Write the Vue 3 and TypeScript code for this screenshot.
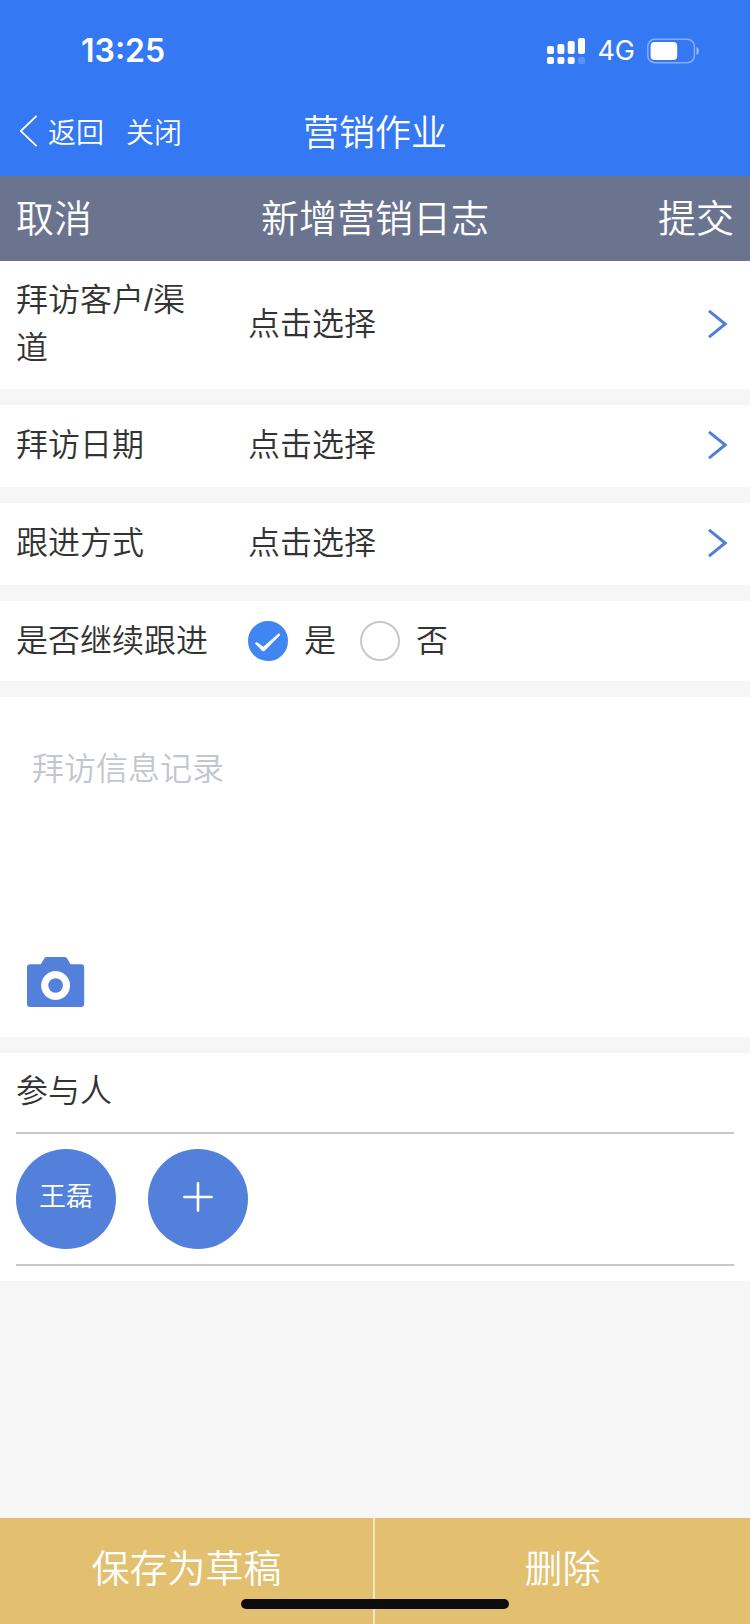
<script setup lang="ts">
import { ref } from 'vue'

interface PickField {
  id: string
  label: string
  value: string
}

const fields: PickField[] = [
  { id: 'customer', label: '拜访客户/渠道', value: '点击选择' },
  { id: 'date', label: '拜访日期', value: '点击选择' },
  { id: 'method', label: '跟进方式', value: '点击选择' },
]

const options = [
  { value: 'yes', label: '是' },
  { value: 'no', label: '否' },
]

const followUp = ref('yes')
const record = ref('')
const participants = ref<string[]>(['王磊'])
</script>

<template>
  <div class="page">
    <header class="top">
      <div class="status">
        <span class="time">13:25</span>
        <div class="indicators">
          <svg width="38" height="26" viewBox="0 0 38 26" fill="#fff" aria-hidden="true">
            <rect x="0" y="8" width="7" height="8" rx="2" />
            <rect x="10.4" y="6" width="7" height="10" rx="2" />
            <rect x="20.7" y="3" width="7" height="13" rx="2" />
            <rect x="31" y="0" width="7" height="16" rx="2" />
            <rect x="0" y="19" width="7" height="7" rx="2" />
            <rect x="10.4" y="19" width="7" height="7" rx="2" />
            <rect x="20.7" y="19" width="7" height="7" rx="2" />
            <rect x="31" y="19" width="7" height="7" rx="2" opacity="0.2" />
          </svg>
          <span class="network">4G</span>
          <svg width="52" height="26" viewBox="0 0 52 26" aria-hidden="true">
            <rect x="0.8" y="1.3" width="46.6" height="23.4" rx="7" fill="none" stroke="#fff" stroke-opacity="0.4" stroke-width="1.5" />
            <rect x="3.6" y="4" width="26.6" height="18" rx="4" fill="#fff" />
            <path d="M49.5 9 C52.7 10.2 52.7 15.8 49.5 17 Z" fill="#fff" fill-opacity="0.5" />
          </svg>
        </div>
      </div>
      <nav class="nav">
        <div class="nav-left">
          <button type="button" class="back">
            <svg width="18" height="32" viewBox="0 0 18 32" fill="none" stroke="#fff" stroke-width="1.8" aria-hidden="true">
              <path d="M16.6 0.8 L0.8 16 L16.6 31.2" />
            </svg>
            <span>返回</span>
          </button>
          <button type="button">关闭</button>
        </div>
        <h1>营销作业</h1>
      </nav>
    </header>

    <div class="toolbar">
      <button type="button" class="cancel">取消</button>
      <h2>新增营销日志</h2>
      <button type="button" class="submit">提交</button>
    </div>

    <main class="form">
      <div v-for="field in fields" :key="field.id" class="card row">
        <label class="label" :for="field.id">{{ field.label }}</label>
        <button :id="field.id" type="button" class="picker">
          <span>{{ field.value }}</span>
          <svg width="20" height="30" viewBox="0 0 20 30" fill="none" stroke="#4f7fd6" stroke-width="3" aria-hidden="true">
            <path d="M1 1.8 L17.2 15 L1 28.2" />
          </svg>
        </button>
      </div>

      <div class="card row choice" role="radiogroup" aria-labelledby="follow-label">
        <span id="follow-label" class="label">是否继续跟进</span>
        <div class="options">
          <label v-for="option in options" :key="option.value" class="option">
            <span class="radio">
              <input v-model="followUp" type="radio" name="follow" :value="option.value" />
              <svg v-if="followUp === option.value" width="40" height="40" viewBox="0 0 40 40" fill="#fff" aria-hidden="true">
                <path d="M7 22.6 Q8.2 20.4 10.2 21.9 L15.3 25.7 L30.6 12.6 Q32.6 12 31.7 14.4 L17 29.5 Q15.4 31 13.8 29.5 Z" />
              </svg>
            </span>
            <span>{{ option.label }}</span>
          </label>
        </div>
      </div>

      <div class="card note">
        <textarea v-model="record" placeholder="拜访信息记录" aria-label="拜访信息记录"></textarea>
        <button type="button" class="camera" aria-label="拍照">
          <svg width="58" height="50" viewBox="0 0 58 50" aria-hidden="true">
            <path fill="#5380db" fill-rule="evenodd" d="M19.5 0 H37.5 Q39 0 40 1.3 L43.5 7.2 H54 Q57.2 7.2 57.2 10.4 V47 Q57.2 50 54 50 H3.2 Q0 50 0 47 V10.4 Q0 7.2 3.2 7.2 H13.7 L17.4 1.3 Q18.3 0 19.5 0 Z M28.6 14 a14.5 14.5 0 1 0 0.01 0 Z" />
            <circle cx="28.6" cy="28.5" r="7.3" fill="#5380db" />
          </svg>
        </button>
      </div>

      <section class="card people">
        <h3>参与人</h3>
        <div class="avatars">
          <span v-for="person in participants" :key="person" class="avatar">{{ person }}</span>
          <button type="button" class="avatar" aria-label="添加参与人">
            <svg width="30" height="30" viewBox="0 0 30 30" stroke="#fff" stroke-width="2.6" stroke-linecap="round" aria-hidden="true">
              <path d="M1.4 15 H28.6 M15 1.4 V28.6" />
            </svg>
          </button>
        </div>
      </section>
    </main>

    <footer class="actions">
      <button type="button">保存为草稿</button>
      <button type="button">删除</button>
      <span class="home-bar"></span>
    </footer>
  </div>
</template>

<style>
body {
  margin: 0;
}
</style>

<style scoped>
.page {
  min-height: 100vh;
  display: flex;
  flex-direction: column;
  background: #f6f6f6;
  color: #333;
  font-family: "Liberation Sans", "Noto Sans CJK SC", sans-serif;
  font-size: 32px;
  font-weight: 350;
  line-height: 48px;
}

.page * {
  box-sizing: border-box;
}

button {
  margin: 0;
  padding: 0;
  border: 0;
  background: none;
  color: inherit;
  font: inherit;
  text-align: left;
}

h1,
h2,
h3 {
  margin: 0;
  font-weight: inherit;
}

.top {
  background: #3478f4;
  color: #fff;
}

.status {
  height: 92px;
  padding: 10px 51px 0 81px;
  display: flex;
  align-items: center;
  justify-content: space-between;
  font-family: Inter, sans-serif;
}

.time {
  font-size: 32px;
  font-weight: 600;
}

.indicators {
  display: flex;
  align-items: center;
  gap: 12px;
}

.network {
  font-size: 27px;
  font-weight: 400;
}

.nav {
  height: 84px;
  padding: 0 16px;
  display: grid;
  grid-template-columns: 1fr auto 1fr;
  align-items: center;
}

.nav-left {
  display: flex;
  align-items: center;
  gap: 22px;
  padding-left: 4px;
  font-size: 28px;
}

.back {
  display: flex;
  align-items: flex-start;
  gap: 10px;
  line-height: 38px;
}

h1 {
  font-size: 36px;
}

.toolbar {
  height: 85px;
  padding: 0 16px;
  display: grid;
  grid-template-columns: 1fr auto 1fr;
  align-items: center;
  background: #6b748f;
  color: #fff;
  font-size: 38px;
}

h2 {
  font-size: 38px;
}

.submit {
  text-align: right;
}

.form {
  display: flex;
  flex-direction: column;
  gap: 16px;
}

.card {
  background: #fff;
}

.row {
  min-height: 82px;
  display: grid;
  grid-template-columns: 200px 1fr;
  column-gap: 32px;
  align-items: center;
  padding: 15px 22px 17px 16px;
}

.picker {
  display: flex;
  align-items: center;
  justify-content: space-between;
}

.choice {
  min-height: 80px;
  padding-top: 16px;
  padding-bottom: 16px;
}

.options {
  display: flex;
  gap: 24px;
}

.option {
  display: flex;
  align-items: center;
  gap: 16px;
}

.radio {
  display: grid;
}

.radio > * {
  grid-area: 1 / 1;
}

.radio svg {
  pointer-events: none;
}

.radio input {
  appearance: none;
  width: 40px;
  height: 40px;
  margin: 0;
  border: 2px solid #c8c8cc;
  border-radius: 50%;
  background: #fff;
}

.radio input:checked {
  border-color: #4086f2;
  background: #4086f2;
}

.note {
  display: flex;
  flex-direction: column;
  align-items: flex-start;
  padding: 48px 27px 30px;
}

textarea {
  width: 100%;
  height: 212px;
  padding: 0 5px;
  border: 0;
  outline: 0;
  resize: none;
  background: none;
  color: inherit;
  font: inherit;
}

textarea::placeholder {
  color: #c3c6d1;
  opacity: 1;
}

.camera svg {
  display: block;
}

.people {
  padding: 0 16px 15px;
}

h3 {
  padding: 14px 0 17px;
  border-bottom: 2px solid #c8c8c8;
  font-size: 32px;
}

.avatars {
  display: flex;
  gap: 32px;
  padding: 15px 0;
  border-bottom: 2px solid #c8c8c8;
}

.avatar {
  width: 100px;
  height: 100px;
  padding-bottom: 4px;
  display: flex;
  align-items: center;
  justify-content: center;
  border-radius: 50%;
  background: #5380db;
  color: #fff;
  font-size: 27px;
}

.actions {
  position: relative;
  margin-top: auto;
  display: grid;
  grid-template-columns: 1fr 1fr;
  background: #e2c070;
  color: #fff;
  font-size: 38px;
}

.actions button {
  height: 106px;
  padding-bottom: 4px;
  text-align: center;
}

.actions button:first-child {
  border-right: 2px solid #f3e6c8;
}

.home-bar {
  position: absolute;
  bottom: 15px;
  left: 50%;
  width: 268px;
  height: 10px;
  margin-left: -134px;
  border-radius: 5px;
  background: #0d0d0d;
}
</style>
